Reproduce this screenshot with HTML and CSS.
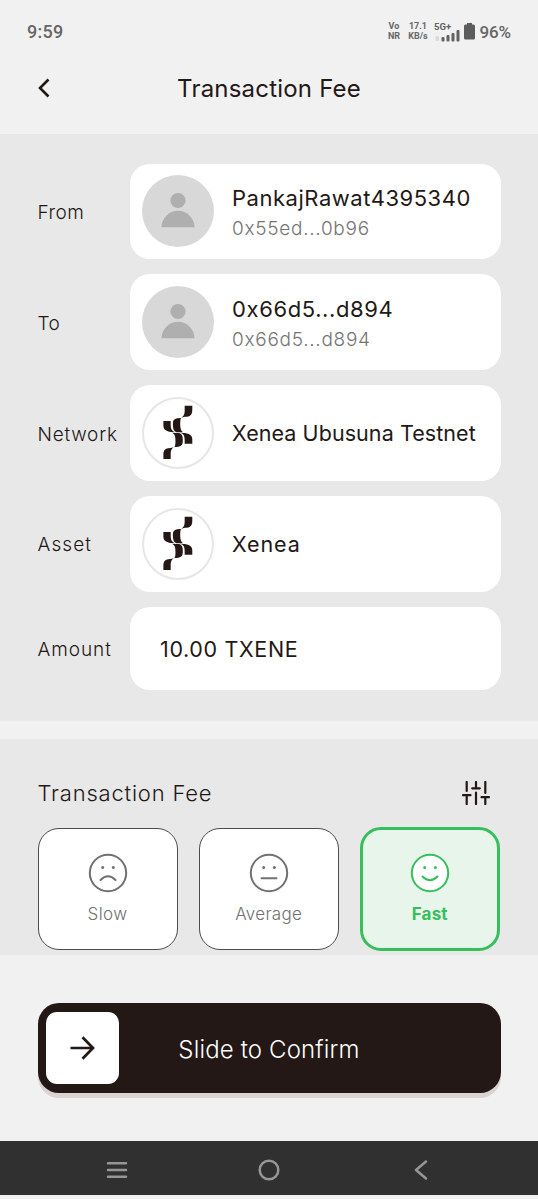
FILE: index.html
```html
<!DOCTYPE html>
<html lang="en">
<head>
<meta charset="utf-8">
<title>Transaction Fee</title>
<link rel="stylesheet" href="styles.css">
</head>
<body>
<svg class="defs" width="0" height="0">
  <symbol id="person" viewBox="0 0 72 72">
    <circle cx="36" cy="25.5" r="7.6"/><path d="M19.5 52.3a16.5 16.5 0 0 1 33 0z"/>
  </symbol>
  <symbol id="xenea" viewBox="35 36 214 214">
    <path d="M163 57H187V68C187 88 180 91 165 92C158 93 153 96 149 99C160 90 163 84 163 72Z"/>
    <path d="M151 96C149 104 149 109 149 116C149 128 151 135 158 141H137C128 137 126 128 126 117V112C126 99 136 96 151 96Z"/>
    <path d="M96 105H119V116C119 130 123 137 134 141C116 140 96 138 96 120Z"/>
    <path d="M124 143H146C155 146 157 153 157 164V169C157 182 150 187 131 187C134 181 134 176 134 167C134 153 132 147 124 143Z"/>
    <path d="M149 142C170 143 187 145 187 163V177H163V166C163 152 160 146 149 142Z"/>
    <path d="M134 184C123 190 119 197 119 210V225H96V211C96 196 102 191 117 190C125 190 130 187 134 184Z"/>
  </symbol>
</svg>
<div class="screen">
  <header class="top">
    <div class="status">
      <span class="clock">9:59</span>
      <div class="indicators">
        <div class="mini vo"><span>Vo</span><span>NR</span></div>
        <div class="mini rate"><span>17.1</span><span>KB/s</span></div>
        <svg class="signal" width="28" height="20" viewBox="0 0 28 20"><text x="0" y="8">5G+</text>
          <g><rect class="dim" x="1.5" y="14" width="3.5" height="5" rx="1.5"/><rect x="7.5" y="15" width="3" height="4.5" rx="1"/><rect x="12.5" y="13" width="3" height="6.5" rx="1"/><rect x="17.5" y="11" width="3" height="8.500" rx="1"/><rect x="22.500" y="8" width="3" height="11.500" rx="1"/></g></svg>
        <svg class="battery" width="11" height="17" viewBox="0 0 11 17"><path d="M3 0h5v1.500h1.500a1.500 1.500 0 0 1 1.500 1.500v12a1.500 1.500 0 0 1-1.500 1.500h-8A1.500 1.500 0 0 1 0 15V3a1.500 1.500 0 0 1 1.500-1.500H3z"/></svg>
        <span class="percent">96%</span>
      </div>
    </div>
    <div class="titlebar">
      <svg class="back" width="14" height="22" viewBox="0 0 14 22"><path d="M11.500 2.500L3 11l8.500 8.500"/></svg>
      <h1>Transaction Fee</h1>
    </div>
  </header>

  <section class="details">
    <div class="row"><span class="label">From</span><div class="card"><svg class="avatar"><use href="#person"/></svg><div class="who"><span class="name n-from">PankajRawat4395340</span><span class="addr a-from">0x55ed...0b96</span></div></div></div>
    <div class="row"><span class="label">To</span><div class="card"><svg class="avatar"><use href="#person"/></svg><div class="who"><span class="name n-to">0x66d5...d894</span><span class="addr a-to">0x66d5...d894</span></div></div></div>
    <div class="row"><span class="label l-net">Network</span><div class="card"><svg class="logo"><use href="#xenea"/></svg><span class="value v-net">Xenea Ubusuna Testnet</span></div></div>
    <div class="row"><span class="label l-asset">Asset</span><div class="card"><svg class="logo"><use href="#xenea"/></svg><span class="value v-asset">Xenea</span></div></div>
    <div class="row"><span class="label l-amount">Amount</span><div class="card amount"><span class="value v-amount">10.00 TXENE</span></div></div>
  </section>

  <section class="fees">
    <div class="feehead"><h2>Transaction Fee</h2>
      <svg width="28" height="24" viewBox="0 0 28 24"><path d="M4.700 1v9M1 14.200h7.500M4.700 14.200V23M14 1v6M10.200 7.300h7.600M14 11.500V23M23.300 1v11M19.500 16.200H27M23.300 16.200V23"/></svg></div>
    <div class="options">
      <div class="option"><svg class="face" viewBox="0 0 40 40"><circle cx="20" cy="20" r="18.200"/><path d="M12.500 27q7.500-7.500 15 0"/><circle class="eye" cx="14.700" cy="14.500" r="1.500"/><circle class="eye" cx="25.300" cy="14.500" r="1.500"/></svg><span class="o-slow">Slow</span></div>
      <div class="option"><svg class="face" viewBox="0 0 40 40"><circle cx="20" cy="20" r="18.200"/><path d="M12.500 25.300h15"/><circle class="eye" cx="14.700" cy="14.500" r="1.500"/><circle class="eye" cx="25.300" cy="14.500" r="1.500"/></svg><span class="o-average">Average</span></div>
      <div class="option selected"><svg class="face" viewBox="0 0 40 40"><circle cx="20" cy="20" r="18.200"/><path d="M12.500 23.500q7.500 7.500 15 0"/><circle class="eye" cx="14.700" cy="14.500" r="1.500"/><circle class="eye" cx="25.300" cy="14.500" r="1.500"/></svg><span class="o-fast">Fast</span></div>
    </div>
  </section>

  <section class="confirm">
    <div class="slider">
      <div class="thumb"><svg width="26" height="26" viewBox="0 0 26 26"><path d="M1.500 13h22M13.500 2.200L24 13 13.500 23.800"/></svg></div>
      <span>Slide to Confirm</span>
    </div>
  </section>

  <nav class="sysnav">
    <svg viewBox="0 0 24 24"><path d="M3 5.200h18M3 12h18M3 18.800h18"/></svg>
    <svg viewBox="0 0 24 24"><circle cx="12" cy="12" r="9.300"/></svg>
    <svg viewBox="0 0 24 24"><path d="M17 3.500L7 12l10 8.500"/></svg>
  </nav>
</div>
</body>
</html>
```
FILE: styles.css
```css
* { box-sizing: border-box; }
body { margin: 0; background: #f1f1f1; color: #231815; font-family: Inter, "Liberation Sans", sans-serif; }
.defs { display: block; }
.screen { width: 538px; height: 1199px; display: flex; flex-direction: column; overflow: hidden; }
svg { flex: none; }
span, h1, h2 { white-space: nowrap; }

.top { height: 133.5px; flex: none; padding: 19px 27px 0; }
.status { height: 25px; display: flex; justify-content: space-between; align-items: center; font-family: Roboto, sans-serif; color: #666; }
.clock { font-size: 18px; font-weight: 500; letter-spacing: .3px; }
.indicators { display: flex; align-items: center; }
.mini { display: flex; flex-direction: column; align-items: center; font-size: 9px; line-height: 9.500px; font-weight: 700; }
.vo { width: 13px; }
.rate { width: 19px; margin: 0 7px 0 8px; }
.signal { fill: #626262; font: 700 9.500px Roboto, sans-serif; }
.signal .dim { fill: #d9d9d9; }
.battery { fill: #5c5c5c; margin: 0 4px 0 2px; }
.percent { font-size: 17px; font-weight: 500; letter-spacing: -.1px; }
.titlebar { height: 88px; display: grid; grid-template-columns: 34px 1fr 34px; align-items: center; }
.back { margin-left: 10px; fill: none; stroke: #231815; stroke-width: 2.600; }
h1 { margin: 0; padding-top: 2px; font-size: 24px; line-height: 30px; font-weight: 400; text-align: center; letter-spacing: .2px; }

.details { height: 587px; flex: none; background: #e8e8e8; padding: 30.200px 37.500px 0; display: flex; flex-direction: column; gap: 15.300px; }
.row { display: grid; grid-template-columns: 92.500px 1fr; align-items: center; }
.label { font-size: 19px; font-weight: 300; letter-spacing: .5px; padding-top: 2px; }
.l-net { letter-spacing: .75px; }
.l-asset { letter-spacing: 1.100px; }
.l-amount { letter-spacing: .95px; }
.card { height: 95.500px; border-radius: 20px; background: #fff; display: flex; align-items: center; gap: 18px; padding-left: 12px; }
.avatar { width: 72px; height: 72px; border-radius: 50%; background: #d8d8d8; fill: #afafaf; }
.logo { width: 72px; height: 72px; border-radius: 50%; border: 2px solid #e6e6e6; fill: #231815; }
.who { display: flex; flex-direction: column; padding-top: 4px; }
.name { font-size: 22px; line-height: 30px; }
.n-from { letter-spacing: .53px; }
.n-to { letter-spacing: .62px; }
.addr { font-size: 19px; line-height: 31px; font-weight: 300; color: #747474; letter-spacing: .72px; }
.value { font-size: 21.500px; line-height: 30px; }
.v-net { letter-spacing: .07px; }
.v-asset { letter-spacing: .9px; padding-top: 1px; }
.v-amount { letter-spacing: .65px; padding-top: 1px; }
.amount { height: 83.500px; padding-left: 30px; }

.fees { height: 216px; flex: none; margin-top: 18.500px; background: #e8e8e8; padding: 39px 37.500px 0; }
.feehead { height: 30px; display: flex; justify-content: space-between; align-items: center; padding-right: 10.500px; }
.feehead svg { fill: none; stroke: #231815; stroke-width: 2.200; stroke-linecap: round; }
h2 { margin: 0; font-size: 22px; font-weight: 300; letter-spacing: .8px; }
.options { display: grid; grid-template-columns: 140px 140px 140.500px; justify-content: space-between; margin-top: 20px; }
.option { height: 121.500px; border: 1.500px solid #4c4c4c; border-radius: 21px; background: #fff; color: #717171; display: flex; flex-direction: column; align-items: center; justify-content: center; gap: 7px; padding-top: 4px; font-size: 17px; line-height: 28px; font-weight: 300; }
.selected { height: 124px; margin: -1px .500px 0 -.500px; padding-top: 3px; border: 3px solid #36bf5c; background: #e7f5eb; color: #36bf5c; font-weight: 700; }
.o-slow { letter-spacing: .4px; }
.o-average { letter-spacing: .3px; }
.o-fast { letter-spacing: .2px; }
.face { width: 40px; height: 40px; fill: #fff; stroke: currentColor; stroke-width: 2; stroke-linecap: round; }
.face path { fill: none; }
.face .eye { fill: currentColor; stroke: none; }

.confirm { height: 186px; flex: none; padding: 48px 37.500px 0; }
.slider { height: 90px; border-radius: 21px; background: #231815; box-shadow: 0 5px 0 #d9d3d3; display: grid; grid-template-columns: 72.500px 1fr 72.500px; align-items: center; padding: 0 8.500px; color: #fff; font-size: 24px; font-weight: 300; text-align: center; }
.slider > span { padding-top: 2px; letter-spacing: .15px; }
.thumb { height: 72.500px; border-radius: 11px; background: #fff; display: grid; place-items: center; }
.thumb svg { fill: none; stroke: #231815; stroke-width: 2.700; }
.sysnav { height: 54px; flex: none; background: #303030; display: flex; justify-content: space-between; align-items: center; padding: 4px 105px 0; }
.sysnav svg { width: 24px; height: 24px; fill: none; stroke: #969696; stroke-width: 2.500; stroke-linecap: round; stroke-linejoin: round; }
```
